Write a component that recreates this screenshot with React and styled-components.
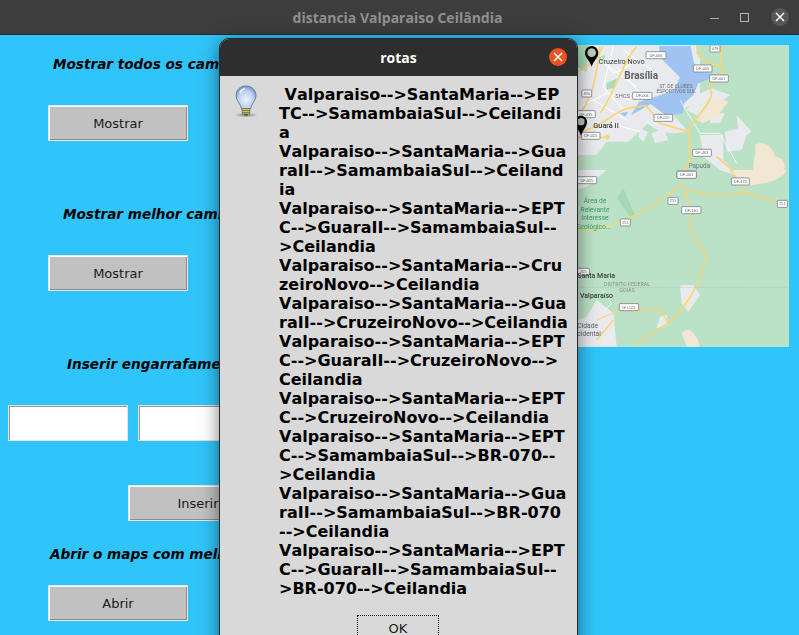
import React from 'react';
import styled, { createGlobalStyle } from 'styled-components';

const GlobalStyle = createGlobalStyle`
  html, body {
    margin: 0;
    padding: 0;
    height: 100%;
    overflow: hidden;
    background: #30c5fa;
  }
`;

const Screen = styled.div`
  position: relative;
  width: 799px;
  height: 635px;
  overflow: hidden;
  background: #30c5fa;
  font-family: "DejaVu Sans", sans-serif;
`;

const TitleBar = styled.header`
  display: flex;
  align-items: center;
  justify-content: center;
  position: relative;
  height: 34px;
  background: #3d3d3d;
  border-bottom: 1px solid #2b2b2b;
  color: #909090;
  font: 700 14px "Open Sans", "Noto Sans", sans-serif;
  padding-right: 4px;
`;

const WindowControls = styled.div`
  position: absolute;
  top: 0;
  right: 10px;
  height: 34px;
  display: flex;
  align-items: center;
  gap: 17px;
`;

const MinIcon = styled.span`
  width: 9px;
  height: 1px;
  margin-top: 3px;
  margin-right: 4px;
  background: #a9a9a9;
`;

const MaxIcon = styled.span`
  width: 7px;
  height: 7px;
  margin-right: 5px;
  border: 1px solid #b5b5b5;
`;

const CloseCircle = styled.span`
  width: 18px;
  height: 18px;
  border-radius: 50%;
  display: flex;
  align-items: center;
  justify-content: center;
  background: ${p => p.$accent ? '#e95420' : '#575757'};
`;

const Content = styled.main`
  display: flex;
  justify-content: space-between;
  height: 600px;
  padding-right: 10px;
`;

const LeftColumn = styled.div`
  display: flex;
  flex-direction: column;
  width: 560px;
`;

const Label = styled.div`
  height: 20px;
  line-height: 20px;
  margin-top: ${p => p.$top}px;
  margin-left: ${p => p.$left}px;
  color: #000;
  font-size: 13.6px;
  font-weight: 700;
  font-style: italic;
  white-space: nowrap;
`;

const TkButton = styled.button`
  display: block;
  box-sizing: border-box;
  width: 140px;
  height: 36px;
  margin-top: ${p => p.$top}px;
  margin-left: ${p => p.$left}px;
  padding: 0;
  background: #c1c1c1;
  border: 1px solid #e6e6e6;
  box-shadow: inset 1px 1px 0 #fff, inset -1px -1px 0 #8c8c8c;
  color: #1a1a1a;
  font: 400 13px "DejaVu Sans", sans-serif;
`;

const EntryRow = styled.div`
  display: flex;
  gap: 10px;
  margin-top: 31px;
  margin-left: 8px;
`;

const Entry = styled.input`
  box-sizing: border-box;
  width: 120px;
  height: 36px;
  padding: 0;
  background: #fff;
  border: 1px solid #e2e2e2;
  box-shadow: inset 1px 1px 0 #999;
  outline: none;
`;

const MapFrame = styled.svg`
  display: block;
  width: 229px;
  height: 302px;
  margin-top: 10px;
  filter: blur(0.45px);
`;

const Dialog = styled.section`
  position: absolute;
  left: 220px;
  top: 39px;
  width: 357px;
  height: 640px;
  border-radius: 9px 9px 0 0;
  background: #d9d9d9;
  box-shadow: 0 3px 20px rgba(0, 0, 0, 0.55);
  outline: 1px solid #26292b;
`;

const DialogHeader = styled.div`
  display: flex;
  align-items: center;
  justify-content: center;
  position: relative;
  height: 37px;
  border-radius: 9px 9px 0 0;
  background: #2e2e2e;
  color: #fff;
  font: 700 14px "Open Sans", "Noto Sans", sans-serif;
`;

const DialogClose = styled.div`
  position: absolute;
  top: 9px;
  right: 10px;
`;

const DialogBody = styled.div`
  display: flex;
  padding: 9px 0 0 13px;
`;

const BulbIcon = styled.svg`
  flex: none;
  width: 26px;
  height: 36px;
  margin-right: 20px;
`;

const Message = styled.div`
  color: #000;
  font-size: 16px;
  font-weight: 700;
  line-height: 19px;
  font-kerning: none;
`;

const MessageLine = styled.div`
  height: 19px;
  white-space: pre;
`;

const OkButton = styled.button`
  display: block;
  box-sizing: border-box;
  width: 82px;
  height: 36px;
  margin: 17px 0 0 137px;
  padding: 0 0 10px;
  background: #d9d9d9;
  border: 1px dotted #000;
  color: #1a1a1a;
  font: 400 13px "DejaVu Sans", sans-serif;
`;

const lines = [
  ' Valparaiso-->SantaMaria-->EP',
  'TC-->SamambaiaSul-->Ceilandi',
  'a',
  'Valparaiso-->SantaMaria-->Gua',
  'raII-->SamambaiaSul-->Ceiland',
  'ia',
  'Valparaiso-->SantaMaria-->EPT',
  'C-->GuaraII-->SamambaiaSul--',
  '>Ceilandia',
  'Valparaiso-->SantaMaria-->Cru',
  'zeiroNovo-->Ceilandia',
  'Valparaiso-->SantaMaria-->Gua',
  'raII-->CruzeiroNovo-->Ceilandia',
  'Valparaiso-->SantaMaria-->EPT',
  'C-->GuaraII-->CruzeiroNovo-->',
  'Ceilandia',
  'Valparaiso-->SantaMaria-->EPT',
  'C-->CruzeiroNovo-->Ceilandia',
  'Valparaiso-->SantaMaria-->EPT',
  'C-->SamambaiaSul-->BR-070--',
  '>Ceilandia',
  'Valparaiso-->SantaMaria-->Gua',
  'raII-->SamambaiaSul-->BR-070',
  '-->Ceilandia',
  'Valparaiso-->SantaMaria-->EPT',
  'C-->GuaraII-->SamambaiaSul--',
  '>BR-070-->Ceilandia',
];

function CloseX() {
  return (
    <svg width="10" height="10" viewBox="0 0 10 10">
      <path d="M1 1L9 9M9 1L1 9" stroke="#fff" strokeWidth="1.5" />
    </svg>
  );
}

function Bulb() {
  return (
    <BulbIcon viewBox="0 0 26 36">
      <defs>
        <radialGradient id="glass" cx="0.5" cy="0.6" r="0.6">
          <stop offset="0" stopColor="#eef3fb" />
          <stop offset="0.65" stopColor="#bccfee" />
          <stop offset="1" stopColor="#6f8fc8" />
        </radialGradient>
        <radialGradient id="bulbShadow">
          <stop offset="0" stopColor="#000" stopOpacity="0.4" />
          <stop offset="1" stopColor="#000" stopOpacity="0" />
        </radialGradient>
      </defs>
      <ellipse cx="13" cy="30" rx="12" ry="2.5" fill="url(#bulbShadow)" />
      <path d="M13 1C6.800 1 3 5.400 3 10.600c0 5 4.400 7.400 5.400 13h9.200c1-5.600 5.400-8 5.400-13C23 5.400 19.200 1 13 1z" fill="url(#glass)" stroke="#63799f" strokeWidth="0.9" />
      <path d="M7 8c1-3 3-4 5-4" stroke="#fff" strokeWidth="1.5" fill="none" />
      <path d="M9 23.500h8l-.4 5.500h-7.200z" fill="#c9c06f" stroke="#77734a" strokeWidth="0.8" />
      <path d="M9 25.500h8M9.300 27.500h7.400" stroke="#77734a" strokeWidth="0.8" />
      <path d="M11 29h4v1.500h-4z" fill="#55523a" />
    </BulbIcon>
  );
}

const roadProps = { fill: 'none', stroke: '#fcd470', strokeWidth: 5, strokeLinejoin: 'round' };
const shieldText = { fontFamily: '"Liberation Sans", sans-serif', fontSize: 11.5, fill: '#5f6368', textAnchor: 'middle' };
const placeText = { fontFamily: '"Roboto", sans-serif', textAnchor: 'start' };

function Shield({ x, y, w = 60, label }) {
  return (
    <g>
      <rect x={x} y={y} width={w} height={21} rx={2} fill="#fff" stroke="#7d8185" strokeWidth={2.5} />
      <text x={x + w / 2} y={y + 15} {...shieldText}>{label}</text>
    </g>
  );
}

function Pin({ x, y, r = 20 }) {
  return (
    <g transform={`translate(${x} ${y})`}>
      <path d={`M0 52C-6 32-${r} 26-${r} 10a${r} ${r} 0 0 1 ${r * 2} 0C${r} 26 6 32 0 52z`} fill="#000" />
      <circle cy="10" r={r - 7} fill="#b9cdb9" />
    </g>
  );
}

// coordinates inside the groups are the 3x ones read off the zoomed crops
function MapPicture() {
  return (
    <MapFrame viewBox="560 45 229 302">
      <rect x="560" y="45" width="229" height="302" fill="#bbe2c6" />
      <g transform="translate(560 0) scale(0.33333)">
        <path d="M40 135H420V300L340 345 385 395 340 400 300 395 262 372 205 425 140 425 110 465 H40z" fill="#e8eaed" />
        <path d="M455 265L510 285 490 300 460 320 420 350 380 330 420 280z" fill="#e8eaed" />
        <path d="M452 340H495L480 368 450 370zM530 345L575 395 560 405 545 450 500 455 495 395 535 385z" fill="#e8eaed" />
        <path d="M420 405L490 405 490 480 540 530 480 510 430 470z" fill="#e8eaed" />
        <path d="M275 400L310 385 325 420 285 430zM240 385L265 395 250 425 235 410z" fill="#e8eaed" />
        <path d="M585 435C610 420 640 440 645 470 665 470 680 490 672 510 650 540 610 540 585 535 570 500 590 470 585 435z" fill="#f1e7d3" />
        <path d="M410 360L470 290 505 305 475 345 430 370z" fill="#f1e7d3" />
        <path d="M410 135H490L490 195 430 190 410 160z" fill="#bbe2c6" />
        <path d="M50 135H85L80 215 50 200zM140 250L170 235 165 262 140 270zM105 175L135 165 130 190z" fill="#aadcb6" />
        <path d="M298 138H392L402 190 430 215 472 225 440 240 415 250 400 285 372 310 370 340 320 348 272 312 245 328 212 346 238 305 282 292 340 272 360 232 330 202 298 170z" fill="#a0c3f1" />
        <path d="M180 340L205 335 195 350z" fill="#a0c3f1" />
        <path d="M100 140L160 220 220 190M60 320L140 280 210 300M160 140L130 260 190 330M70 420L150 370 240 395M110 175L230 260M170 200L250 290M190 150L290 220M100 300L200 360" fill="none" stroke="#fff" strokeWidth="3" />
        <path d="M360 300L420 400 480 400 530 490" fill="none" stroke="#fff" strokeWidth="2" />
        <path d="M50 215C80 205 95 190 130 140M120 140C110 220 100 300 50 350M230 140C190 180 160 290 120 340M50 395C130 390 160 320 240 320C265 305 270 340 300 370L385 395M385 395C395 360 450 320 455 280 440 260 480 225 490 210 470 170 490 150 480 135M385 395L390 470 370 540M470 470L540 530M50 412H145M410 135C415 170 440 195 480 195" {...roadProps} />
        <circle cx="142" cy="412" r="7" fill="#fcd470" />
        <Shield x={258} y={155} label="DF-006" />
        <Shield x={400} y={195} w={56} label="DF-005" />
        <Shield x={449} y={225} w={56} label="DF-001" />
        <Shield x={218} y={277} w={58} label="DF-004" />
        <Shield x={282} y={343} w={56} label="DF-025" />
        <Shield x={65} y={270} w={30} label="490" />
        <Shield x={50} y={332} w={56} label="DF-035" />
        <Shield x={64} y={397} w={56} label="DF-025" />
        <Shield x={398} y={448} w={56} label="DF-463" />
        <Shield x={351} y={513} w={58} label="DF-001" />
        <Shield x={450} y={135} w={30} label="479" />
        <text x="116" y="193" {...placeText} fontSize="22" fill="#3c4043">Cruzeiro Novo</text>
        <text x="193" y="236" {...placeText} fontSize="30" fontWeight="700" fill="#5f6368">Brasília</text>
        <text x="166" y="293" {...placeText} fontSize="17" fill="#70757a">SHCS</text>
        <text x="348" y="265" {...placeText} fontSize="15" fill="#70757a" textAnchor="middle">ST. DE CLUBES</text>
        <text x="348" y="280" {...placeText} fontSize="15" fill="#70757a" textAnchor="middle">ESPORTIVOS SUL</text>
        <text x="100" y="383" {...placeText} fontSize="22" fontWeight="500" fill="#3c4043">Guará II</text>
        <text x="386" y="505" {...placeText} fontSize="19" fill="#70757a">Papuda</text>
        <Pin x={95} y={148} />
        <Pin x={63} y={355} r={18} />
      </g>
      <g transform="translate(560 170) scale(0.33333)">
        <path d="M50 0H140L80 50 50 60z" fill="#e8eaed" />
        <path d="M520 0H680C670 30 600 50 540 45z" fill="#f1e7d3" />
        <path d="M80 440L110 390 160 430 170 530H50V450z" fill="#e8eaed" />
        <path d="M360 345H400L420 375 385 425 365 400z" fill="#e8eaed" />
        <path d="M372 390L400 360 385 425z" fill="#f1e7d3" />
        <path d="M300 440L320 435 325 465 290 475z" fill="#e8eaed" />
        <path d="M365 490C385 465 410 490 420 530H380z" fill="#f1e7d3" />
        <path d="M170 85L190 55 225 135 215 145z" fill="#a5d8b2" />
        <path d="M60 185C160 170 250 140 370 40M370 40L395 135 392 180 437 255C430 320 390 400 330 455L225 525M370 70C410 50 430 90 550 68L680 100M510 0L555 68M110 450L185 420 230 425 300 415 325 460M160 450L110 510" {...roadProps} strokeWidth="4" />
        <path d="M50 352H685" fill="none" stroke="#9aa0a6" strokeWidth="1.5" strokeDasharray="2 3" />
        <path d="M125 360L155 400 135 420" fill="none" stroke="#fff" strokeWidth="2" />
        <Shield x={351} y={4} w={58} label="DF-001" />
        <Shield x={514} y={24} w={54} label="DF-473" />
        <Shield x={52} y={20} w={58} label="DF-055" />
        <Shield x={365} y={110} w={58} label="DF-140" />
        <Shield x={324} y={82} w={30} label="251" />
        <Shield x={181} y={147} w={30} label="251" />
        <Shield x={652} y={91} w={30} label="251" />
        <Shield x={52} y={295} w={36} label="205" />
        <Shield x={178} y={401} w={58} label="GO-521" />
        <text x="105" y="99" {...placeText} fontSize="20" fill="#3f9a65" textAnchor="middle">Área de</text>
        <text x="105" y="125" {...placeText} fontSize="20" fill="#3f9a65" textAnchor="middle">Relevante</text>
        <text x="105" y="151" {...placeText} fontSize="20" fill="#3f9a65" textAnchor="middle">Interesse</text>
        <text x="102" y="177" {...placeText} fontSize="20" fill="#3f9a65" textAnchor="middle">Ecológico...</text>
        <text x="52" y="324" {...placeText} fontSize="21" fontWeight="500" fill="#3c4043">Santa Maria</text>
        <text x="201" y="349" {...placeText} fontSize="16" fill="#8a8f94" textAnchor="middle">DISTRITO FEDERAL</text>
        <text x="201" y="367" {...placeText} fontSize="16" fill="#8a8f94" textAnchor="middle">GOIÁS</text>
        <text x="60" y="383" {...placeText} fontSize="21" fontWeight="500" fill="#3c4043">Valparaíso</text>
        <text x="52" y="473" {...placeText} fontSize="20" fill="#5f6368">Cidade</text>
        <text x="52" y="497" {...placeText} fontSize="20" fill="#5f6368">cidental</text>
      </g>
    </MapFrame>
  );
}

export default function App() {
  return (
    <Screen>
      <GlobalStyle />
      <TitleBar>
        distancia Valparaiso Ceilândia
        <WindowControls>
          <MinIcon />
          <MaxIcon />
          <CloseCircle><CloseX /></CloseCircle>
        </WindowControls>
      </TitleBar>
      <Content>
        <LeftColumn>
          <Label $top={19} $left={53}>Mostrar todos os caminhos</Label>
          <TkButton $top={31} $left={48}>Mostrar</TkButton>
          <Label $top={63} $left={63}>Mostrar melhor caminho</Label>
          <TkButton $top={31} $left={48}>Mostrar</TkButton>
          <Label $top={63} $left={67}>Inserir engarrafamento</Label>
          <EntryRow>
            <Entry />
            <Entry />
          </EntryRow>
          <TkButton $top={44} $left={128}>Inserir</TkButton>
          <Label $top={23} $left={50}>Abrir o maps com melhor caminho</Label>
          <TkButton $top={21} $left={48}>Abrir</TkButton>
        </LeftColumn>
        <MapPicture />
      </Content>
      <Dialog>
        <DialogHeader>
          rotas
          <DialogClose>
            <CloseCircle $accent><CloseX /></CloseCircle>
          </DialogClose>
        </DialogHeader>
        <DialogBody>
          <Bulb />
          <Message>
            {lines.map((line, i) => <MessageLine key={i}>{line}</MessageLine>)}
          </Message>
        </DialogBody>
        <OkButton>OK</OkButton>
      </Dialog>
    </Screen>
  );
}
